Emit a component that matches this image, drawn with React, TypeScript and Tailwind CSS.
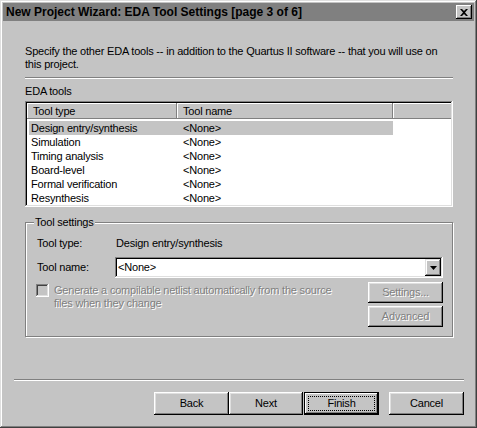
import React from "react";

const font = { fontFamily: '"Liberation Sans", Arial, sans-serif' };

function Btn({ label, disabled, isDefault, w = "w-[75px]" }: { label: string; disabled?: boolean; isDefault?: boolean; w?: string }) {
  if (isDefault) {
    return (
      <div className={`${w} h-[23px] border border-black bg-[#c4c4c4]`}>
        <div className="h-full w-full shadow-[inset_-1px_-1px_0_#000,inset_1px_1px_0_#fff,inset_-2px_-2px_0_#808080] flex items-center justify-center p-[3px]">
          <div className="w-full h-full border border-dotted border-black flex items-center justify-center text-black">{label}</div>
        </div>
      </div>
    );
  }
  return (
    <div
      className={`${w} h-full bg-[#c4c4c4] shadow-[inset_-1px_-1px_0_#000,inset_1px_1px_0_#fff,inset_-2px_-2px_0_#808080,inset_2px_2px_0_#dfdfdf] flex items-center justify-center ${
        disabled ? "text-[#808080] [text-shadow:1px_1px_0_#fff]" : "text-black"
      }`}
    >
      {label}
    </div>
  );
}

const rows = ["Design entry/synthesis", "Simulation", "Timing analysis", "Board-level", "Formal verification", "Resynthesis"];

export default function App() {
  return (
    <div style={font} className="w-[477px] h-[428px] bg-[#c4c4c4] text-[11px] tracking-[-0.2px] leading-[13px] text-black shadow-[inset_-1px_-1px_0_#404040,inset_1px_1px_0_#dfdfdf,inset_-2px_-2px_0_#808080,inset_2px_2px_0_#fff] p-[3px] flex flex-col overflow-hidden whitespace-nowrap">
      {/* Title bar */}
      <div className="h-[18px] bg-[#808080] flex items-center justify-between pl-[3px] pr-[2px] shrink-0">
        <span className="font-bold text-[12px] tracking-normal text-black">New Project Wizard: EDA Tool Settings [page 3 of 6]</span>
        <div className="w-[16px] h-[14px] bg-[#c4c4c4] shadow-[inset_-1px_-1px_0_#000,inset_1px_1px_0_#fff,inset_-2px_-2px_0_#808080] flex items-center justify-center">
          <svg width="8" height="7" viewBox="0 0 8 7">
            <path d="M0 0h2l2 2 2-2h2L5 3.5 8 7H6L4 5 2 7H0l3-3.5z" fill="#000" />
          </svg>
        </div>
      </div>

      {/* Content */}
      <div className="pl-[22px] pr-[21px] pt-[24px] flex flex-col">
        <div>Specify the other EDA tools -- in addition to the Quartus II software -- that you will use on</div>
        <div>this project.</div>
        <div className="mt-[6px] h-[2px] border-t border-[#808080] border-b border-b-white"></div>
        <div className="mt-[6px]">EDA tools</div>

        {/* List view */}
        <div className="mt-[3px] h-[106px] bg-white shadow-[inset_-1px_-1px_0_#fff,inset_1px_1px_0_#808080,inset_-2px_-2px_0_#dfdfdf,inset_2px_2px_0_#000] p-[2px] flex flex-col">
          <div className="flex h-[16px] shrink-0">
            <div className="w-[150px] bg-[#c4c4c4] shadow-[inset_-1px_-1px_0_#808080,inset_1px_1px_0_#fff] pl-[6px] flex items-center">Tool type</div>
            <div className="w-[216px] bg-[#c4c4c4] shadow-[inset_-1px_-1px_0_#808080,inset_1px_1px_0_#fff] pl-[6px] flex items-center">Tool name</div>
            <div className="flex-1 bg-[#c4c4c4] shadow-[inset_0_-1px_0_#808080,inset_1px_1px_0_#fff]"></div>
          </div>
          <div className="pt-[2px] pl-[2px]">
            {rows.map((r, i) => (
              <div key={r} className={`flex h-[14px] items-center w-[364px] ${i === 0 ? "bg-[#c4c4c4]" : ""}`}>
                <div className="w-[154px] pl-[2px]">{r}</div>
                <div>&lt;None&gt;</div>
              </div>
            ))}
          </div>
        </div>

        {/* Tool settings group */}
        <div className="relative mt-[15px] h-[115px] border border-[#808080] shadow-[1px_1px_0_#fff,inset_1px_1px_0_#fff] pl-[11px] pr-[9px] pt-[14px]">
          <div className="absolute -top-[7px] left-[8px] bg-[#c4c4c4] px-[1px]">Tool settings</div>
          <div className="flex items-center h-[13px]">
            <div className="w-[79px]">Tool type:</div>
            <div>Design entry/synthesis</div>
          </div>
          <div className="flex items-center mt-[7px]">
            <div className="w-[78px]">Tool name:</div>
            <div className="flex-1 h-[21px] bg-white shadow-[inset_-1px_-1px_0_#fff,inset_1px_1px_0_#808080,inset_-2px_-2px_0_#dfdfdf,inset_2px_2px_0_#000] flex items-center pl-[3px] pr-[2px]">
              <div className="flex-1">&lt;None&gt;</div>
              <div className="w-[16px] h-[17px] bg-[#c4c4c4] shadow-[inset_-1px_-1px_0_#000,inset_1px_1px_0_#dfdfdf,inset_-2px_-2px_0_#808080,inset_2px_2px_0_#fff] flex items-center justify-center">
                <svg width="7" height="4" viewBox="0 0 7 4">
                  <path d="M0 0h7L3.5 4z" fill="#000" />
                </svg>
              </div>
            </div>
          </div>
          <div className="flex mt-[4px]">
            <div className="w-[13px] h-[13px] mt-[2px] -ml-[1px] shrink-0 bg-[#c4c4c4] shadow-[inset_-1px_-1px_0_#fff,inset_1px_1px_0_#808080,inset_-2px_-2px_0_#dfdfdf,inset_2px_2px_0_#404040]"></div>
            <div className="ml-[5px] pt-[2px] text-[#808080] [text-shadow:1px_1px_0_#fff] flex-1 leading-[13px]">
              <div>Generate a compilable netlist automatically from the source</div>
              <div>files when they change</div>
            </div>
            <div className="flex flex-col gap-[3px]">
              <div className="h-[21px]"><Btn label="Settings..." disabled /></div>
              <div className="h-[21px]"><Btn label="Advanced" disabled /></div>
            </div>
          </div>
        </div>
      </div>

      <div className="ml-[11px] mr-[10px] mt-[42px] h-[2px] shrink-0 border-t border-[#808080] border-b border-b-white"></div>

      <div className="flex mt-[11px] pl-[151px] h-[23px] shrink-0">
        <Btn label="Back" />
        <Btn label="Next" w="w-[74px]" />
        <div className="ml-[1px]"><Btn label="Finish" isDefault /></div>
        <div className="ml-[10px]"><Btn label="Cancel" /></div>
      </div>
    </div>
  );
}
